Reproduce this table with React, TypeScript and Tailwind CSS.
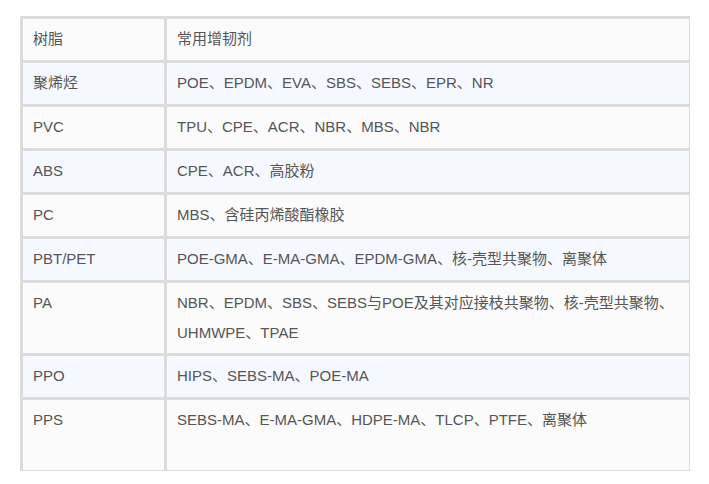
const rows: { resin: string; agents: string; h: string; bg: string }[] = [
  { resin: '树脂', agents: '常用增韧剂', h: 'h-[44px]', bg: 'bg-[#fbfbfb]' },
  { resin: '聚烯烃', agents: 'POE、EPDM、EVA、SBS、SEBS、EPR、NR', h: 'h-[44px]', bg: 'bg-[#f5f9ff]' },
  { resin: 'PVC', agents: 'TPU、CPE、ACR、NBR、MBS、NBR', h: 'h-[44px]', bg: 'bg-[#fbfbfb]' },
  { resin: 'ABS', agents: 'CPE、ACR、高胶粉', h: 'h-[44px]', bg: 'bg-[#f5f9ff]' },
  { resin: 'PC', agents: 'MBS、含硅丙烯酸酯橡胶', h: 'h-[44px]', bg: 'bg-[#fbfbfb]' },
  { resin: 'PBT/PET', agents: 'POE-GMA、E-MA-GMA、EPDM-GMA、核-壳型共聚物、离聚体', h: 'h-[44px]', bg: 'bg-[#f5f9ff]' },
  {
    resin: 'PA',
    agents: 'NBR、EPDM、SBS、SEBS与POE及其对应接枝共聚物、核-壳型共聚物、UHMWPE、TPAE',
    h: 'h-[73px]',
    bg: 'bg-[#fbfbfb]',
  },
  { resin: 'PPO', agents: 'HIPS、SEBS-MA、POE-MA', h: 'h-[44px]', bg: 'bg-[#f5f9ff]' },
  { resin: 'PPS', agents: 'SEBS-MA、E-MA-GMA、HDPE-MA、TLCP、PTFE、离聚体', h: 'h-[73px]', bg: 'bg-[#fbfbfb]' },
];

const App = () => {
  return (
    <div className="h-[484px] w-[709px] bg-white pl-[20px] pt-[16px] font-['Liberation_Sans','Noto_Sans_CJK_SC',sans-serif] text-[15px] leading-[30px] text-[#555]">
      <div className="w-[670px] border-r border-b border-[#dcdcdc]">
        {rows.map((row) => (
          <div key={row.resin} className={`flex border-t-[3px] border-[#dcdcdc] ${row.h} ${row.bg}`}>
            <div className="w-[144px] shrink-0 border-l-[3px] border-[#dcdcdc] px-[10px] pt-[5px]">{row.resin}</div>
            <div className="flex-1 border-l-[3px] border-[#dcdcdc] px-[10px] pt-[5px]">{row.agents}</div>
          </div>
        ))}
      </div>
    </div>
  );
};

export default App;
